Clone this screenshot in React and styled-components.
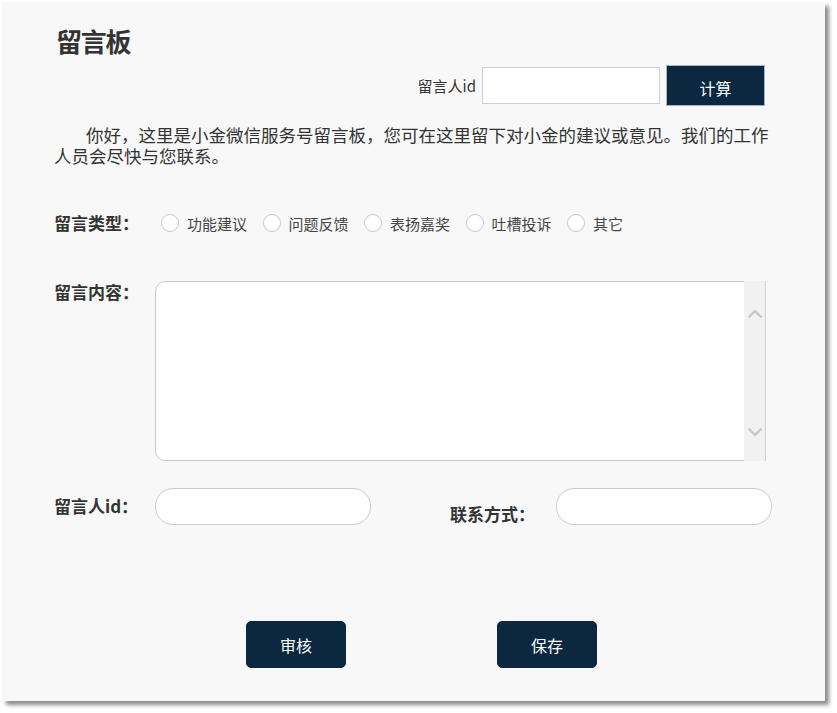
import React from 'react';
import styled, { createGlobalStyle } from 'styled-components';

const GlobalStyle = createGlobalStyle`
  body {
    margin: 0;
    min-height: 713px;
    background: #ffffff;
    font-family: "Noto Sans CJK SC", "Noto Sans", sans-serif;
    color: #333333;
  }
`;

const StyledPanel = styled.main`
  box-sizing: border-box;
  margin: 2px 0 12px 2px;
  width: 823px;
  height: 699px;
  padding: 24px 0 0 52px;
  background: #f8f8f8;
  box-shadow: 4px 4px 4px rgba(0, 0, 0, 0.45);
`;

const StyledTitle = styled.h1`
  margin: 0 0 0 2px;
  font-size: 26px;
  line-height: 30px;
  font-weight: 700;
  letter-spacing: -1.2px;
  color: #333333;
`;

const StyledTopRow = styled.div`
  display: flex;
  justify-content: flex-end;
  align-items: center;
  gap: 6px;
  margin-top: 9px;
  padding-right: 60px;
  height: 41px;
`;

const StyledSmallLabel = styled.span`
  font-size: 15px;
  color: #333333;
`;

const StyledPlainInput = styled.input`
  box-sizing: border-box;
  width: 178px;
  height: 37px;
  border: 1px solid #c9d0dc;
  background: #ffffff;
  outline: none;
`;

const StyledButton = styled.button`
  box-sizing: border-box;
  width: ${({ $square }) => ($square ? '99px' : '100px')};
  height: ${({ $square }) => ($square ? '41px' : '47px')};
  border: 1px solid ${({ $square }) => ($square ? '#a9b2c0' : '#0b2840')};
  border-radius: ${({ $square }) => ($square ? '0' : '5px')};
  background: #0b2840;
  color: #ffffff;
  font-family: inherit;
  font-size: 16px;
  padding: 0;
  padding-top: ${({ $square }) => ($square ? '5px' : '0')};
  cursor: pointer;
`;

const StyledIntro = styled.p`
  margin: 18px 0 0 0;
  width: 722px;
  font-size: 17.5px;
  line-height: 21px;
  text-indent: 32px;
  color: #333333;
`;

const StyledFieldRow = styled.div`
  display: flex;
  align-items: ${({ $top }) => ($top ? 'flex-start' : 'center')};
  margin-top: ${({ $gap }) => $gap}px;
`;

const StyledFieldLabel = styled.label`
  flex: none;
  width: ${({ $width }) => $width || 101}px;
  font-size: 17px;
  font-weight: 700;
  line-height: 22px;
  color: #333333;
  padding-top: ${({ $drop }) => $drop || 0}px;
`;

const StyledRadioGroup = styled.div`
  display: flex;
  align-items: center;
  margin-left: 6px;
`;

const StyledRadioItem = styled.label`
  display: flex;
  align-items: center;
  gap: 8px;
  margin-right: 15.5px;
  font-size: 15px;
  color: #444444;
`;

const StyledRadioCircle = styled.span`
  box-sizing: border-box;
  width: 18px;
  height: 18px;
  border: 1px solid #c3c8d4;
  border-radius: 50%;
  background: #ffffff;
`;

const StyledTextBox = styled.div`
  box-sizing: border-box;
  display: flex;
  width: 611px;
  height: 180px;
  border: 1px solid #c5c9d9;
  border-radius: 10px;
  background: #ffffff;
`;

const StyledTextArea = styled.textarea`
  flex: 1;
  border: none;
  background: transparent;
  resize: none;
  outline: none;
  border-radius: 10px 0 0 10px;
`;

const StyledScrollTrack = styled.div`
  display: flex;
  flex-direction: column;
  justify-content: space-between;
  align-items: center;
  width: 22px;
  margin: -1px -1px -1px 0;
  padding: 28px 0 24px;
  box-sizing: border-box;
  background: #f1f1f1;
  border-right: 1px solid #cfd2de;
`;

const StyledPillInput = styled.input`
  box-sizing: border-box;
  flex: none;
  width: 216px;
  height: 37px;
  border: 1px solid #c5cbdb;
  border-radius: 18px;
  background: #ffffff;
  outline: none;
`;

const StyledSpacer = styled.div`
  flex: none;
  width: ${({ $width }) => $width}px;
`;

const StyledActions = styled.div`
  display: flex;
  gap: 151px;
  margin-top: 96px;
  padding-left: 192px;
`;

const Chevron = ({ up }) => (
  <svg width="16" height="10" viewBox="0 0 16 10">
    <path
      d={up ? 'M1.5 8.5 L8 2 L14.5 8.5' : 'M1.5 1.5 L8 8 L14.5 1.5'}
      fill="none"
      stroke="#c4c4c4"
      strokeWidth="2"
    />
  </svg>
);

const types = ['功能建议', '问题反馈', '表扬嘉奖', '吐槽投诉', '其它'];

const App = () => {
  return (
    <>
      <GlobalStyle />
      <StyledPanel>
        <StyledTitle>留言板</StyledTitle>
        <StyledTopRow>
          <StyledSmallLabel>留言人id</StyledSmallLabel>
          <StyledPlainInput />
          <StyledButton $square>计算</StyledButton>
        </StyledTopRow>
        <StyledIntro>
          你好，这里是小金微信服务号留言板，您可在这里留下对小金的建议或意见。我们的工作人员会尽快与您联系。
        </StyledIntro>
        <StyledFieldRow $gap={46}>
          <StyledFieldLabel>留言类型：</StyledFieldLabel>
          <StyledRadioGroup>
            {types.map((type) => (
              <StyledRadioItem key={type}>
                <StyledRadioCircle />
                {type}
              </StyledRadioItem>
            ))}
          </StyledRadioGroup>
        </StyledFieldRow>
        <StyledFieldRow $gap={47} $top>
          <StyledFieldLabel>留言内容：</StyledFieldLabel>
          <StyledTextBox>
            <StyledTextArea />
            <StyledScrollTrack>
              <Chevron up />
              <Chevron />
            </StyledScrollTrack>
          </StyledTextBox>
        </StyledFieldRow>
        <StyledFieldRow $gap={26}>
          <StyledFieldLabel>留言人id：</StyledFieldLabel>
          <StyledPillInput />
          <StyledSpacer $width={79} />
          <StyledFieldLabel $width={106} $drop={16}>联系方式：</StyledFieldLabel>
          <StyledPillInput />
        </StyledFieldRow>
        <StyledActions>
          <StyledButton>审核</StyledButton>
          <StyledButton>保存</StyledButton>
        </StyledActions>
      </StyledPanel>
    </>
  );
};

export default App;
